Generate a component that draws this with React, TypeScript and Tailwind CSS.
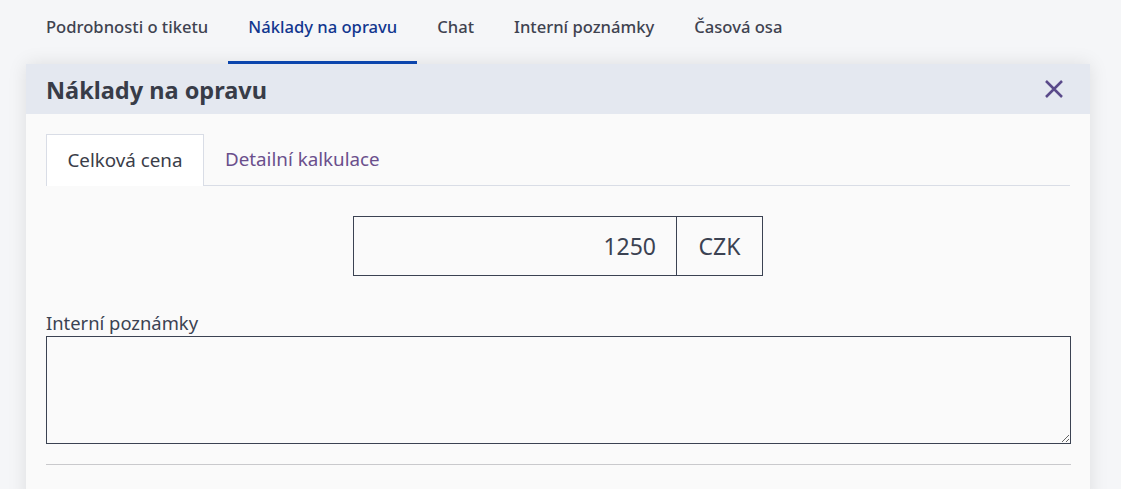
import React from "react";

const font = { fontFamily: '"Noto Sans", "Open Sans", sans-serif' };

export default function App() {
  const tabs = ["Podrobnosti o tiketu", "Náklady na opravu", "Chat", "Interní poznámky", "Časová osa"];
  return (
    <div className="min-h-[489px] bg-[#f5f6f8] overflow-hidden" style={font}>
      <nav className="flex h-[64px] pl-[26px]">
        {tabs.map((t, i) => (
          <div
            key={t}
            className={
              "flex items-center px-5 text-[16.6px] border-b-[3px] " +
              (i === 1
                ? "border-[#0b45ad] text-[#12378f] font-medium"
                : "border-transparent text-[#3f4350] font-medium")
            }
          >
            <span className="-mt-[6px]">{t}</span>
          </div>
        ))}
      </nav>
      <div className="mx-[26px] w-[1064px] bg-[#fafafa] shadow-[0_0_18px_rgba(0,0,0,0.10)] h-[440px]">
        <div className="h-[50px] bg-[#e4e8f0] flex items-center justify-between px-5">
          <h2 className="text-[23.5px] font-bold text-[#383c48] pt-[3px]">Náklady na opravu</h2>
          <svg width="20" height="20" viewBox="0 0 20 20" className="mr-[6px]">
            <path d="M2 2 L18 18 M18 2 L2 18" stroke="#5a4a8a" strokeWidth="2.5" strokeLinecap="butt" />
          </svg>
        </div>
        <div className="px-5 pt-5">
          <div className="flex border-b border-[#d9dde6] h-[52px]">
            <div className="w-[158px] bg-white border border-b-0 border-[#d9dde6] flex items-center justify-center text-[18.8px] text-[#3a3d48] -mb-px h-[52px]">
              Celková cena
            </div>
            <div className="px-[21px] flex items-center text-[18.8px] text-[#6a4f8c]">Detailní kalkulace</div>
          </div>
          <div className="flex justify-center mt-[30px]">
            <div className="flex h-[60px] w-[410px] border border-[#3b4252]">
              <div className="flex-1 flex items-center justify-end pr-[20px] text-[23px] text-[#3b4252]">1250</div>
              <div className="w-[86px] border-l border-[#3b4252] flex items-center justify-center text-[23px] text-[#3b4252]">
                CZK
              </div>
            </div>
          </div>
          <label className="block mt-[34px] text-[18.4px] text-[#3b4252] leading-[26px]">Interní poznámky</label>
          <textarea className="block w-[1025px] h-[108px] border border-[#3b4252] bg-[#fafafa] outline-none" />
          <div className="mt-[20px] w-[1025px] border-t border-[#c9c9cc]" />
        </div>
      </div>
    </div>
  );
}
